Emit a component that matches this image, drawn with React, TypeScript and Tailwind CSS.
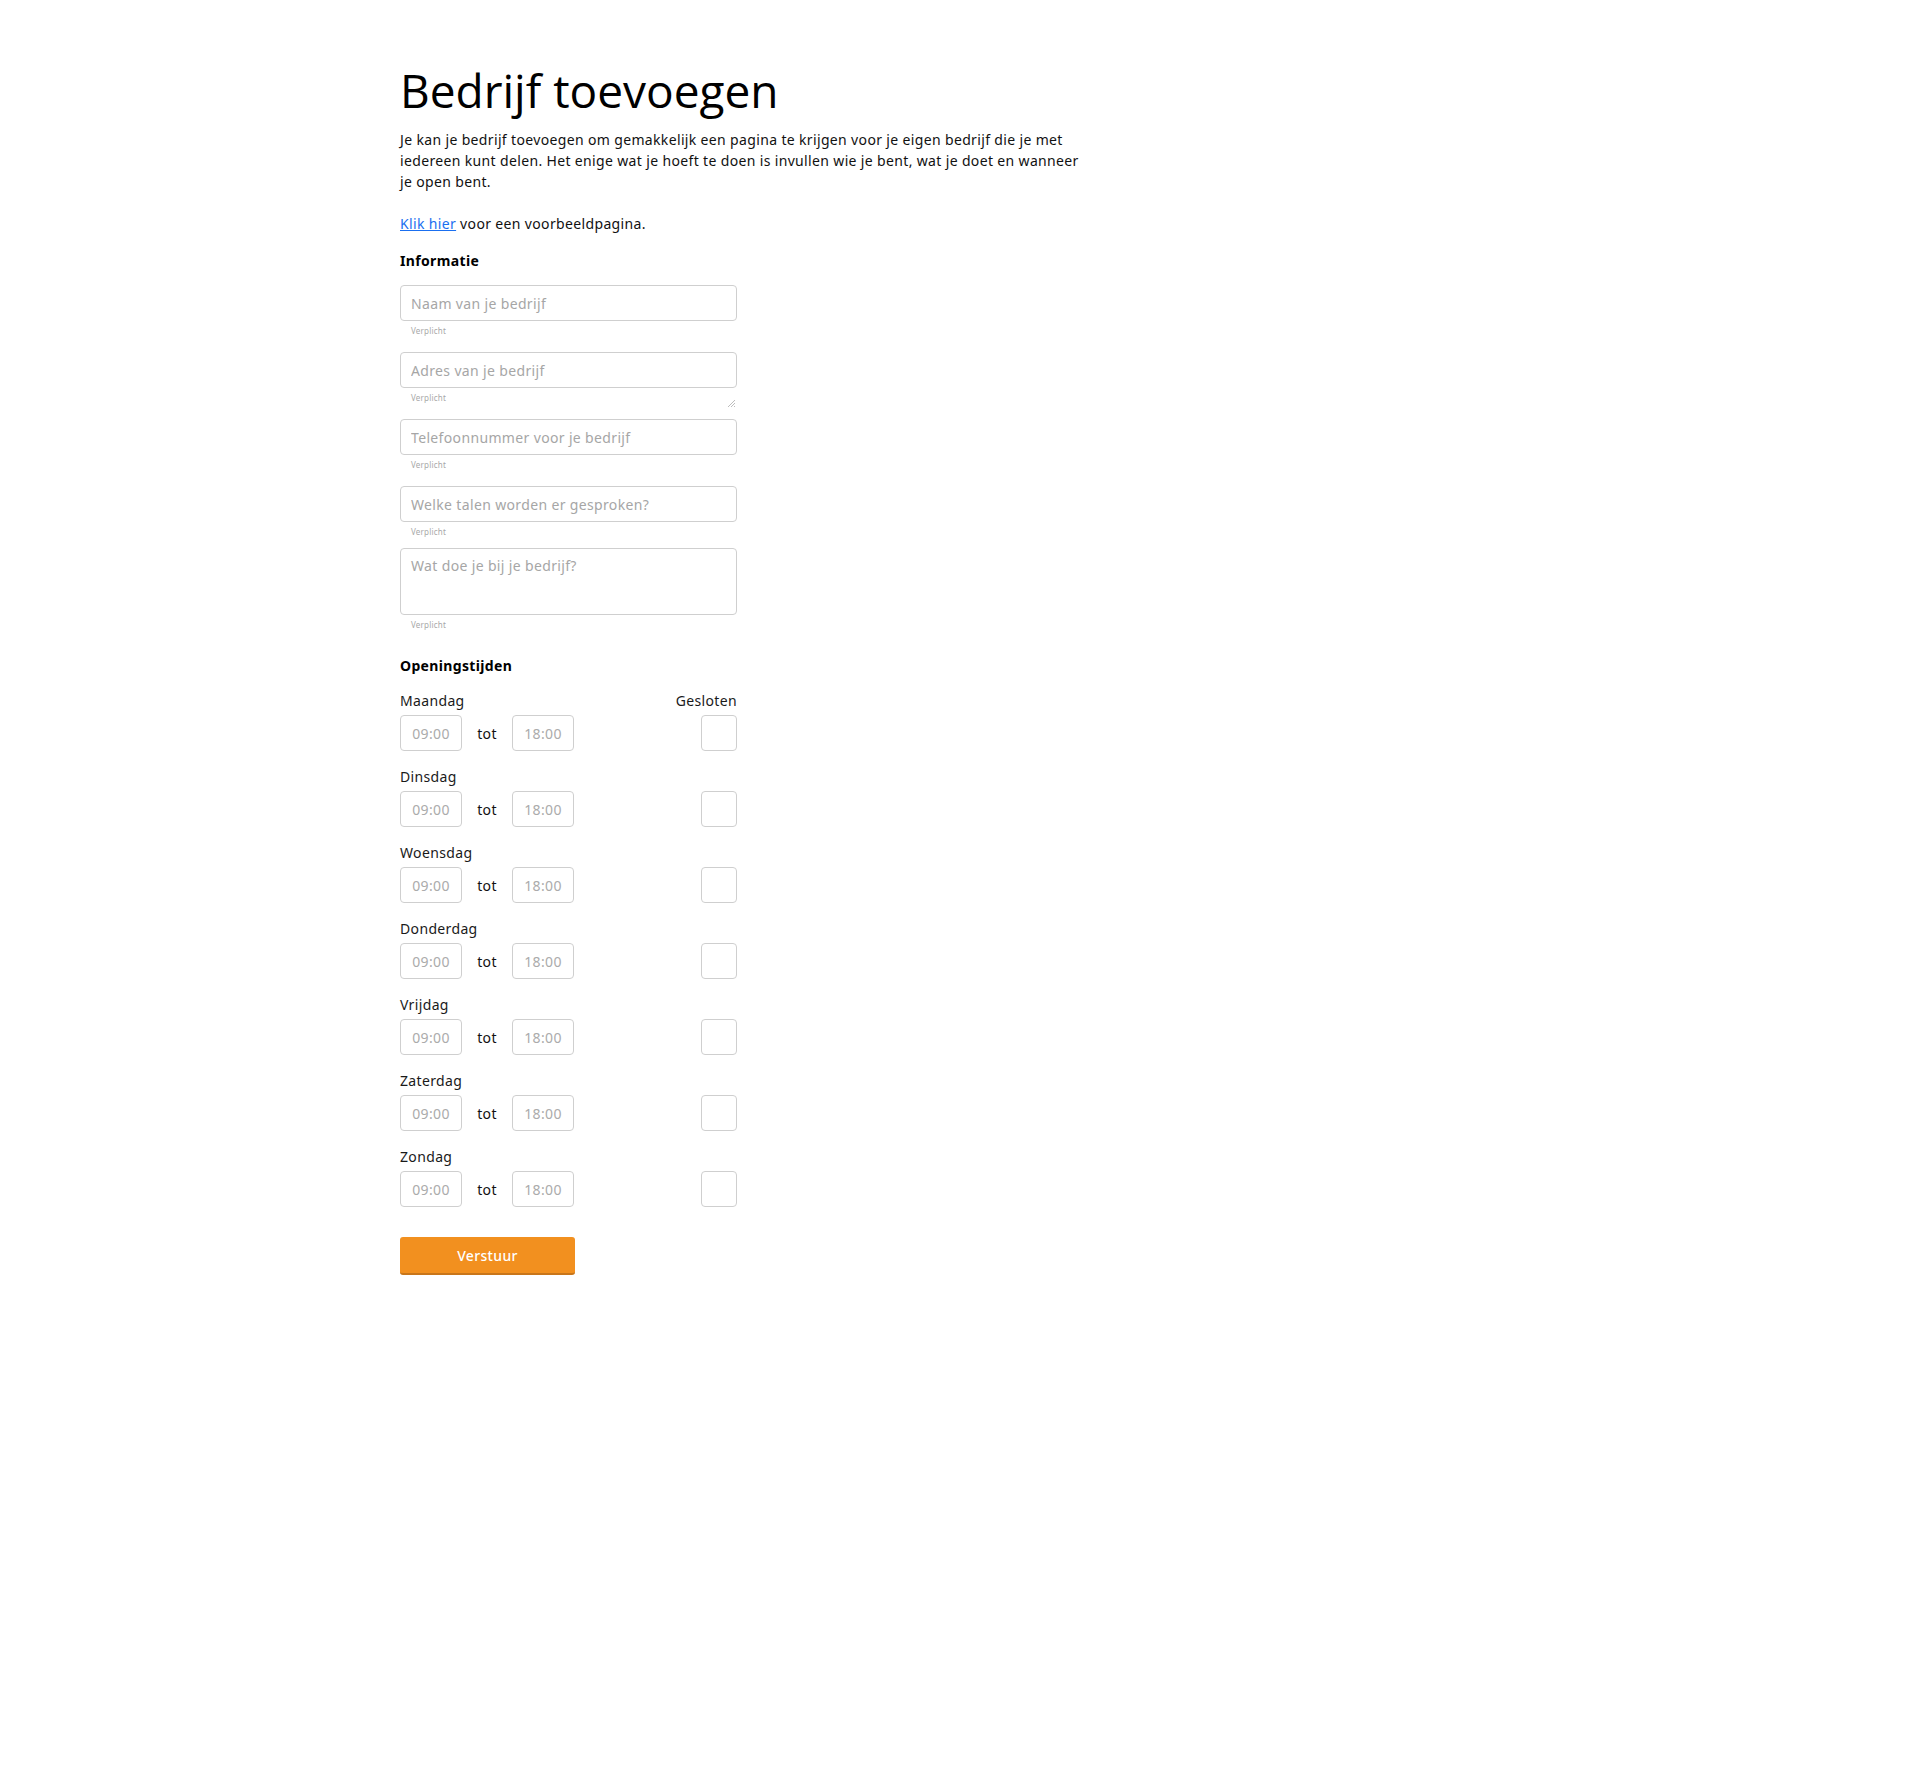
const days = [
  "Maandag",
  "Dinsdag",
  "Woensdag",
  "Donderdag",
  "Vrijdag",
  "Zaterdag",
  "Zondag",
];

function Required() {
  return (
    <div className="mt-[4px] pl-[11px] text-[8px] leading-[12px] tracking-[0.2px] text-[#a8a8a8]">
      Verplicht
    </div>
  );
}

export default function App() {
  return (
    <div className="min-h-[1769px] bg-white font-['Noto_Sans',sans-serif] tracking-[0.35px] text-[#111]">
      <div className="mx-auto w-[1120px] pt-[63px]">
        <h1 className="font-['Open_Sans',sans-serif] text-[46px] leading-[55px] tracking-normal text-black">
          Bedrijf toevoegen
        </h1>
        <p className="mt-[11px] w-[682px] text-[14px] leading-[21px]">
          Je kan je bedrijf toevoegen om gemakkelijk een pagina te krijgen voor
          je eigen bedrijf die je met iedereen kunt delen. Het enige wat je
          hoeft te doen is invullen wie je bent, wat je doet en wanneer je open
          bent.
        </p>
        <p className="mt-[21px] text-[14px] leading-[21px]">
          <a href="#" className="text-[#1a6ff0] underline">
            Klik hier
          </a>{" "}
          voor een voorbeeldpagina.
        </p>

        {/* Informatie */}
        <h2 className="mt-[16px] text-[14px] font-bold leading-[21px] text-black">
          Informatie
        </h2>
        <div className="mt-[14px] w-[337px]">
          <input
            placeholder="Naam van je bedrijf"
            className="h-[36px] w-full rounded-[4px] border border-[#cfcfcf] px-[10px] text-[14px] placeholder:text-[#a6a6a6] outline-none"
          />
          <Required />

          <div className="mt-[15px]">
            <input
              placeholder="Adres van je bedrijf"
              className="h-[36px] w-full rounded-[4px] border border-[#cfcfcf] px-[10px] text-[14px] placeholder:text-[#a6a6a6] outline-none"
            />
            <div className="flex items-start justify-between">
              <Required />
              <svg width="9" height="9" viewBox="0 0 9 9" className="mr-[1px] mt-[11px]">
                <path d="M8 1 L1 8 M8 4 L4 8 M8 7 L7 8" stroke="#bdbdbd" strokeWidth="1" />
              </svg>
            </div>
          </div>

          <div className="mt-[11px]">
            <input
              placeholder="Telefoonnummer voor je bedrijf"
              className="h-[36px] w-full rounded-[4px] border border-[#cfcfcf] px-[10px] text-[14px] placeholder:text-[#a6a6a6] outline-none"
            />
            <Required />
          </div>

          <div className="mt-[15px]">
            <input
              placeholder="Welke talen worden er gesproken?"
              className="h-[36px] w-full rounded-[4px] border border-[#cfcfcf] px-[10px] text-[14px] placeholder:text-[#a6a6a6] outline-none"
            />
            <Required />
          </div>

          <div className="mt-[10px]">
            <textarea
              placeholder="Wat doe je bij je bedrijf?"
              className="block h-[67px] w-full resize-none rounded-[4px] border border-[#cfcfcf] px-[10px] py-[6px] text-[14px] leading-[21px] placeholder:text-[#a6a6a6] outline-none"
            />
            <Required />
          </div>
        </div>

        {/* Openingstijden */}
        <h2 className="mt-[24px] text-[14px] font-bold leading-[21px] text-black">
          Openingstijden
        </h2>
        <div className="mt-[14px] w-[337px]">
          {days.map((day, i) => (
            <div key={day} className="mb-[15px]">
              <div className="flex justify-between text-[14px] leading-[21px] text-[#1a1a1a]">
                <span>{day}</span>
                {i === 0 && <span>Gesloten</span>}
              </div>
              <div className="mt-[4px] flex items-center">
                <input
                  placeholder="09:00"
                  className="h-[36px] w-[62px] rounded-[4px] border border-[#cfcfcf] text-center text-[14px] placeholder:text-[#ababab] outline-none"
                />
                <span className="w-[50px] text-center text-[14px] text-[#111]">tot</span>
                <input
                  placeholder="18:00"
                  className="h-[36px] w-[62px] rounded-[4px] border border-[#cfcfcf] text-center text-[14px] placeholder:text-[#ababab] outline-none"
                />
                <div className="ml-auto h-[36px] w-[36px] rounded-[4px] border border-[#cfcfcf]" />
              </div>
            </div>
          ))}
        </div>

        <button className="mt-[15px] h-[38px] w-[175px] rounded-[3px] border-b-2 border-[#c9761a] bg-[#f2901f] text-[14px] font-medium text-white">
          Verstuur
        </button>
      </div>
    </div>
  );
}
